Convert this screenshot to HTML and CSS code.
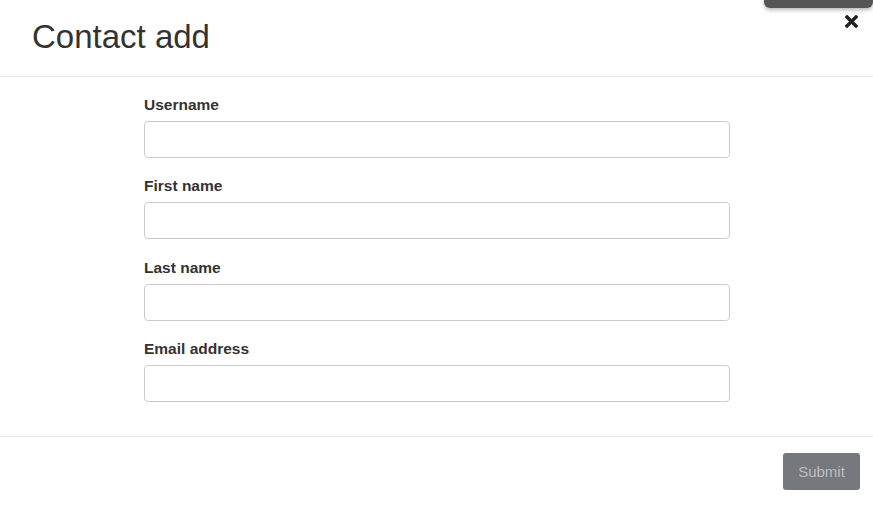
FILE: index.html
```html
<!DOCTYPE html>
<html>
<head>
<meta charset="utf-8">
<link rel="stylesheet" href="styles.css">
</head>
<body>
<div class="toast-edge"></div>
<div class="modal">
  <header class="modal-header">
    <h1 class="modal-title">Contact add</h1>
    <button class="close" aria-label="Close">
      <svg width="13" height="13" viewBox="0 0 13 13"><path d="M2 2 L11 11 M11 2 L2 11" stroke="#222" stroke-width="3.4" stroke-linecap="square"/></svg>
    </button>
  </header>
  <div class="modal-body">
    <form class="form">
      <div class="group"><label>Username</label><input type="text"></div>
      <div class="group"><label>First name</label><input type="text"></div>
      <div class="group"><label>Last name</label><input type="text"></div>
      <div class="group"><label>Email address</label><input type="text"></div>
    </form>
  </div>
  <footer class="modal-footer">
    <button class="btn-submit" disabled>Submit</button>
  </footer>
</div>
</body>
</html>
```
FILE: styles.css
```css
* { box-sizing: border-box; }
html, body { margin: 0; padding: 0; background: #fff; }
body { font-family: "Liberation Sans", Arial, sans-serif; color: #333; }

.toast-edge {
  position: absolute;
  top: -6px;
  right: 0;
  width: 109px;
  height: 14px;
  background: #555;
  border-radius: 6px;
  box-shadow: 0 2px 4px rgba(0,0,0,0.3);
}

.modal { display: flex; flex-direction: column; }

.modal-header {
  display: flex;
  justify-content: space-between;
  align-items: flex-start;
  height: 77px;
  padding: 19px 15px 0 32px;
  border-bottom: 1px solid #e5e5e5;
}
.modal-title {
  margin: 0;
  font-size: 33px;
  font-weight: 400;
  line-height: 35px;
  color: #333;
}
.close {
  border: 0;
  background: none;
  padding: 0;
  margin-top: -4px;
  width: 13px;
  height: 13px;
  display: flex;
}

.modal-body {
  display: flex;
  justify-content: center;
  padding: 18px 0 15.4px;
  border-bottom: 1px solid #e5e5e5;
}
.form { width: 586px; margin-left: 1px; }
.group { display: flex; flex-direction: column; margin-bottom: 18.4px; }
.group label {
  font-size: 15.5px;
  font-weight: 700;
  line-height: 20px;
  color: #333;
  margin-bottom: 6px;
}
.group input {
  height: 37px;
  border: 1px solid #ccc;
  border-radius: 4px;
  font-size: 14px;
  padding: 6px 12px;
}

.modal-footer {
  display: flex;
  justify-content: flex-end;
  padding: 16px 13px 16px;
}
.btn-submit {
  height: 37px;
  width: 77px;
  border: 0;
  border-radius: 3px;
  background: #75787c;
  color: #bcbec1;
  font-family: "Liberation Sans", Arial, sans-serif;
  font-size: 15px;
  padding: 0;
}
```
